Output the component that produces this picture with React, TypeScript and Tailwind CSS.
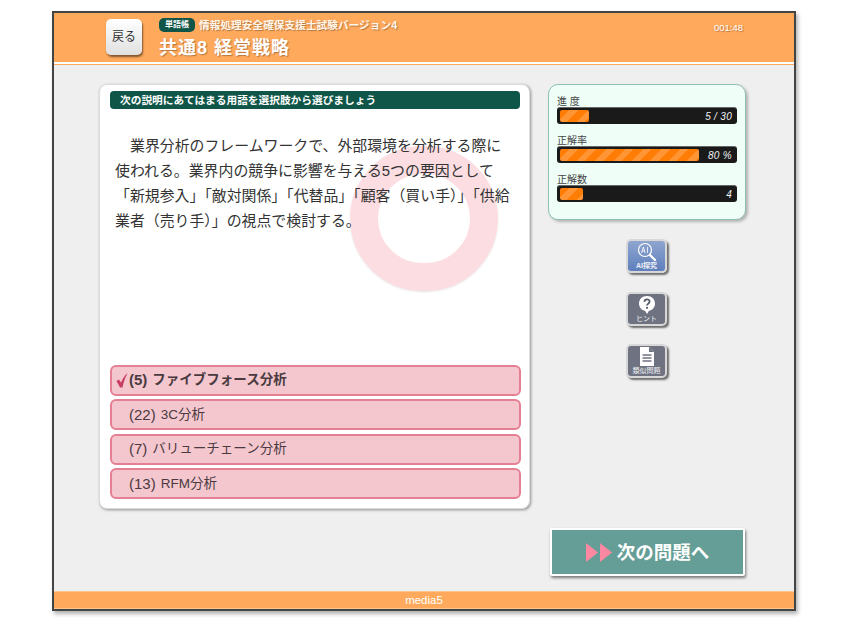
import type { ReactNode } from 'react'

const jp = "font-['Liberation_Sans','Noto_Sans_CJK_JP',sans-serif]"

const stats = [
  { label: '進 度', value: '5 / 30', fill: 'w-[29px]' },
  { label: '正解率', value: '80 %', fill: 'w-[139px]' },
  { label: '正解数', value: '4', fill: 'w-[23px]' },
]

const choices = [
  { num: '(5)', text: 'ファイブフォース分析', picked: true },
  { num: '(22)', text: '3C分析', picked: false },
  { num: '(7)', text: 'バリューチェーン分析', picked: false },
  { num: '(13)', text: 'RFM分析', picked: false },
]

function SideButton({ label, blue, children }: { label: string; blue?: boolean; children: ReactNode }) {
  return (
    <div
      className={`flex h-[34px] w-[41px] flex-col items-center justify-between rounded-[5px] border-2 border-[#d8d8d8] pb-px pt-px shadow-[2px_2px_2px_rgba(0,0,0,0.55)] ${
        blue ? 'bg-linear-to-b from-[#8fa5cf] to-[#5f80bd]' : 'bg-[#6f7280]'
      }`}
    >
      {children}
      <span className={`text-[7px] leading-[8px] text-[#eef0f5] ${blue ? 'font-bold' : 'font-normal'}`}>{label}</span>
    </div>
  )
}

export default function App() {
  return (
    <div className={`h-[628px] w-[848px] bg-white pl-[52px] pt-[11px] ${jp}`}>
      <div className="flex h-[600px] w-[744px] flex-col border-2 border-[#444] bg-[#efefef] shadow-[2px_3px_4px_rgba(0,0,0,0.3)]">
        <header className="h-[52px] shrink-0 bg-[#ffa95c]">
          <div className="flex h-[51px] border-b-2 border-white pl-[52px] pt-[5px]">
            <div className="mt-px flex h-[36px] w-[36px] items-center justify-center rounded-[5px] bg-linear-to-b from-white to-[#e0e0e0] text-[12px] text-[#333] shadow-[1px_2px_2px_rgba(0,0,0,0.5)]">
              戻る
            </div>
            <div className="ml-[17px] flex flex-col">
              <div className="flex h-[14px] items-center">
                <span className="flex h-[14px] w-[36px] items-center justify-center rounded-[5px] bg-[#0f5649] text-[8px] font-bold text-white">
                  単語帳
                </span>
                <span className="ml-[4px] text-[10.7px] font-bold text-[#fff6ea] [text-shadow:1px_1px_1px_rgba(0,0,0,0.3)]">
                  情報処理安全確保支援士試験バージョン4
                </span>
              </div>
              <h1 className="mt-[4px] text-[18px] font-bold leading-[24px] tracking-[1px] text-white [text-shadow:1px_1px_1px_rgba(0,0,0,0.3)]">
                共通8 経営戦略
              </h1>
            </div>
            <span className="ml-auto mr-[51px] mt-[3px] text-[9.5px] leading-[14px] text-white [text-shadow:1px_1px_1px_rgba(0,0,0,0.3)]">
              001:48
            </span>
          </div>
        </header>

        <main className="flex min-h-0 flex-1 pb-[15px] pl-[45px] pt-[19px]">
          <section className="relative flex h-[425px] w-[431px] flex-col overflow-hidden rounded-[8px] border border-[#ddd] bg-white pb-[9px] pl-[10px] pr-[8px] pt-[6px] shadow-[1px_1px_3px_rgba(0,0,0,0.4)]">
            <div className="absolute left-[250px] top-[61px] h-[145px] w-[148px] rounded-full border-[28px] border-[#fcdde1] shadow-[0_1px_2px_rgba(0,0,0,0.1)]" />
            <div className="relative mr-[1px] flex h-[18px] items-center rounded-[4px] bg-[#0f5649] pl-[10px] text-[10.7px] font-bold text-white">
              次の説明にあてはまる用語を選択肢から選びましょう
            </div>
            <p className="relative mr-[9px] mt-[25px] flex-1 pl-[5px] text-[14.9px] leading-[25px] text-[#333]">
              <span className="inline-block w-[15px]" />
              業界分析のフレームワークで、外部環境を分析する際に使われる。業界内の競争に影響を与える5つの要因として「新規参入」「敵対関係」「代替品」「顧客（買い手）」「供給業者（売り手）」の視点で検討する。
            </p>
            <div className="relative flex flex-col gap-[3.5px]">
              {choices.map((c) => (
                <div
                  key={c.num}
                  className={`relative flex h-[31px] items-center rounded-[6px] border-2 border-[#e57f93] bg-[#f4c7cf] pl-[17px] pt-px text-[13.5px] text-[#4a3a40] ${
                    c.picked ? 'font-bold' : ''
                  }`}
                >
                  {c.picked && (
                    <svg className="absolute left-[4px] top-[6px]" width="12" height="15" viewBox="0 0 12 15">
                      <path d="M0.5 8 L3 6.5 L5 9.5 C6.5 6 8.5 2.5 11.5 0 C9.5 4 7.5 9 6.5 14.5 L4 14.5 Z" fill="#c93d63" />
                    </svg>
                  )}
                  <span className="mr-[5px] text-[15px]">{c.num}</span>
                  {c.text}
                </div>
              ))}
            </div>
          </section>

          <aside className="ml-[18px] flex w-[198px] flex-col items-center">
            <div className="h-[136px] w-full rounded-[10px] border border-[#8fbfb4] bg-[#efffF8] px-[8px] pt-[9px] shadow-[2px_2px_3px_rgba(0,0,0,0.25)]">
              {stats.map((s) => (
                <div key={s.label} className="mb-[9px]">
                  <div className="h-[13px] text-[10px] leading-[15px] text-[#444]">{s.label}</div>
                  <div className="relative flex h-[17px] w-[180px] items-center rounded-[3px] border-t border-[#666] bg-[#1a1a1a] pl-[3px]">
                    <div
                      className={`h-[12px] rounded-[2px] bg-[repeating-linear-gradient(135deg,#ff7d05_0,#ff7d05_7px,#ff9535_7px,#ff9535_13px)] ${s.fill}`}
                    />
                    <span className="absolute right-[5px] text-[10px] font-medium italic tracking-[0.3px] text-[#f2f2f2]">
                      {s.value}
                    </span>
                  </div>
                </div>
              ))}
            </div>

            <div className="mr-[1px] mt-[19px]">
              <SideButton label="AI探究" blue>
                <svg width="20" height="20" viewBox="0 0 20 20" fill="none" className="-mb-px">
                  <circle cx="8" cy="8" r="6.5" stroke="#fff" strokeWidth="1.2" />
                  <path d="M13 13 L18 18" stroke="#fff" strokeWidth="2.4" strokeLinecap="round" />
                  <path d="M4.5 11 L6.4 5 L8 11 M5.2 9 H7.6 M10.5 5 V11" stroke="#fff" strokeWidth="0.8" />
                </svg>
              </SideButton>
            </div>
            <div className="mr-[1px] mt-[19px]">
              <SideButton label="ヒント">
                <svg width="18" height="20" viewBox="0 0 18 20">
                  <path d="M9 1 C14 1 17 4.5 17 8.5 C17 12.5 14 15.5 11 15.8 L9 19 L7 15.8 C4 15.5 1 12.5 1 8.5 C1 4.5 4 1 9 1 Z" fill="#fff" />
                  <path d="M6.4 6.8 C6.6 3.6 11.6 3.6 11.6 6.6 C11.6 8.6 9 8.6 9 10.5" fill="none" stroke="#555a68" strokeWidth="1.8" />
                  <circle cx="9" cy="12.8" r="1.1" fill="#555a68" />
                </svg>
              </SideButton>
            </div>
            <div className="mr-[1px] mt-[18px]">
              <SideButton label="類似問題">
                <svg width="14" height="19" viewBox="0 0 14 19">
                  <path d="M0 0 H9 L14 5 V19 H0 Z" fill="#fff" />
                  <path d="M9 0 V5 H14" fill="#6f7280" />
                  <path d="M2.5 8 H11.5 M2.5 11 H11.5 M2.5 14 H11.5" stroke="#6f7280" strokeWidth="1.3" />
                </svg>
              </SideButton>
            </div>

            <div className="ml-[1px] mt-auto flex h-[48px] w-[195px] items-center justify-center rounded-[2px] border-2 border-white bg-[#659e96] pt-px shadow-[1px_2px_3px_rgba(0,0,0,0.5)]">
              <svg width="26" height="19" viewBox="0 0 26 19" className="mr-[5px]">
                <path d="M0 0 L12 9.5 L0 19 Z M14 0 L26 9.5 L14 19 Z" fill="#fd88a2" />
              </svg>
              <span className="text-[18.5px] font-bold text-white">次の問題へ</span>
            </div>
          </aside>
        </main>

        <footer className="flex h-[18px] shrink-0 items-center justify-center border-y border-[#ffc48f] bg-[#ffa95c] pt-px text-[11.5px] text-white">
          media5
        </footer>
      </div>
    </div>
  )
}
